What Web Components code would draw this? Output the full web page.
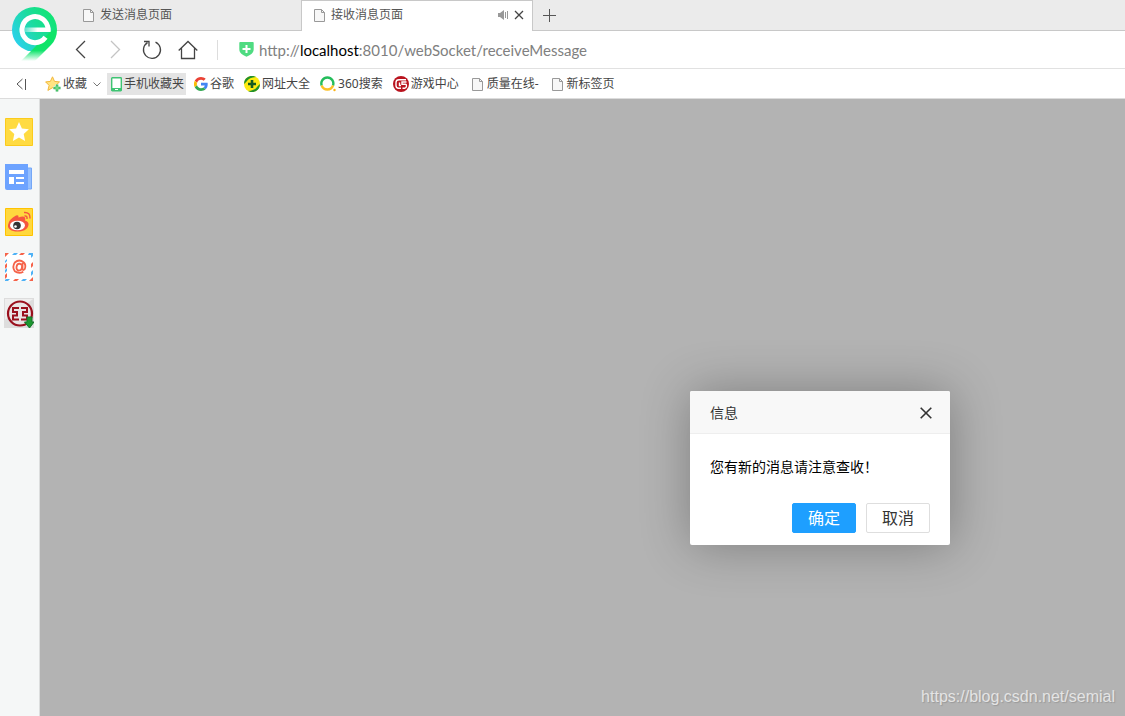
<!DOCTYPE html>
<html lang="zh-CN">
<head>
<meta charset="utf-8">
<title>接收消息页面</title>
<style>
html, body { margin: 0; height: 100%; }
body { font: 12px/16px "Noto Sans", "Noto Sans CJK SC", sans-serif; color: #444; }
</style>
</head>
<body>
<browser-window></browser-window>
<script>
const ICONS = {
  page: '<svg width="16" height="16" viewBox="0 0 16 16"><path d="M3.5 2.5h7l3 3v9h-10z" fill="#f7f7f7" stroke="#999"/><path d="M10.500 2.500v3h3" fill="none" stroke="#999"/></svg>',
  sound: '<svg width="12" height="12" viewBox="0 0 12 12"><path d="M1 4h2l4-3v10L3 8H1z" fill="#999"/><path d="M8.500 3v6M10.500 2v8" stroke="#999"/></svg>',
  close: '<svg width="10" height="10" viewBox="0 0 10 10"><path d="M1 1l8 8M9 1L1 9" stroke="#444" stroke-width="1.300"/></svg>',
  plus: '<svg width="13" height="13" viewBox="0 0 13 13"><path d="M6.500 0v13M0 6.500h13" stroke="#555"/></svg>',
  back: '<svg width="20" height="20" viewBox="0 0 20 20"><path d="M15 1L6.500 9.500 15 18" fill="none" stroke="#444" stroke-width="1.300"/></svg>',
  forward: '<svg width="20" height="20" viewBox="0 0 20 20"><path d="M5 1l8.500 8.500L5 18" fill="none" stroke="#c4c4c4" stroke-width="1.300"/></svg>',
  reload: '<svg width="20" height="20" viewBox="0 0 20 20"><path d="M13.500 2.100A8.500 8.500 0 1 1 5.500 2.600M2 1.500h5v5" fill="none" stroke="#444" stroke-width="1.300"/></svg>',
  home: '<svg width="20" height="20" viewBox="0 0 20 20"><path d="M.7 10.500L10 1.500l9.300 9M3.500 8v10.500h13V8" fill="none" stroke="#444" stroke-width="1.300"/></svg>',
  shield: '<svg width="15" height="16" viewBox="0 0 15 16"><path d="M1 0h13q.7 0 .7 1v6c0 4-3 6-7.200 7.700C3.300 13 .3 11 .3 7V1q0-1 .7-1z" fill="#4fdb81"/><path d="M7.500 3v8M3.500 7h8" stroke="#fff" stroke-width="2"/></svg>',
  collapse: '<svg width="12" height="12" viewBox="0 0 12 12"><path d="M7.500 1L2 6l5.500 5M10.500 1v11" fill="none" stroke="#555"/></svg>',
  star: '<svg width="16" height="16" viewBox="0 0 16 16"><path d="M7.500.8l2 4.600 5 .5-3.700 3.500 1 5-4.300-2.700-4.600 2.700 1.200-5L.6 5.900l4.800-.5z" fill="#ffe482" stroke="#f3b73b" stroke-linejoin="round"/><path d="M12 8.500v7M8.500 12h7" stroke="#fff" stroke-width="4"/><path d="M12 8.500v7M8.500 12h7" stroke="#2fb457" stroke-width="2.600"/><path d="M12 9.500v5M9.500 12h5" stroke="#8ee89c"/></svg>',
  chevron: '<svg width="8" height="8" viewBox="0 0 8 8"><path d="M.5 2.500L4 6l3.500-3.500" fill="none" stroke="#777"/></svg>',
  phone: '<svg width="13" height="16" viewBox="0 0 13 16"><rect x="2.700" y="1.700" width="9.600" height="13" rx=".6" fill="#fff" stroke="#3fc473" stroke-width="1.400"/><path d="M2.500 12h10v3h-10z" fill="#3fc473"/><path d="M6 13.500h3" stroke="#fff"/></svg>',
  google: '<svg width="14" height="14" viewBox="0 0 48 48"><path fill="#ea4335" d="M24 9.500c3.500 0 6.700 1.200 9.200 3.600l6.900-6.900C35.900 2.400 30.500 0 24 0 14.600 0 6.500 5.400 2.600 13.200l8 6.200C12.400 13.700 17.700 9.500 24 9.500z"/><path fill="#4285f4" d="M47 24.600c0-1.600-.2-3.100-.4-4.600H24v9h12.900c-.6 3-2.200 5.500-4.700 7.200l7.700 6C44.400 38 47 31.800 47 24.600z"/><path fill="#fbbc05" d="M10.500 28.600a14.500 14.500 0 0 1 0-9.200l-8-6.200a24 24 0 0 0 0 21.600z"/><path fill="#34a853" d="M24 48c6.500 0 11.900-2.100 15.900-5.800l-7.700-6c-2.200 1.500-4.900 2.300-8.200 2.300-6.300 0-11.600-4.200-13.500-9.900l-8 6.200C6.500 42.600 14.600 48 24 48z"/></svg>',
  sites: '<svg width="16" height="16" viewBox="0 0 16 16"><circle cx="8" cy="8" r="8" fill="#fcea10"/><path d="M0 8A8 8 0 0 1 12 1Q5 1.500 3 5 1.300 7 0 8zM16 8A8 8 0 0 1 4 15q7-.5 9-4 1.700-2 3-3z" fill="#20902c"/><path d="M8 4v8M4 8h8" stroke="#155c20" stroke-width="2.600"/></svg>',
  search: '<svg width="16" height="16" viewBox="0 0 16 16"><path d="M1.700 9.500A6 6 0 1 1 13 9.500" fill="none" stroke="#24bd5b" stroke-width="2.400"/><path d="M1.700 9.500A6 6 0 0 0 13 9.500" fill="none" stroke="#fcc126" stroke-width="2.400"/><circle cx="14.500" cy="14" r="1.200" fill="#fcb316"/></svg>',
  games: '<svg width="16" height="16" viewBox="0 0 16 16"><circle cx="8" cy="8" r="8" fill="#b9131e"/><path d="M13 3.800H6Q3 3.800 3 6.500v3Q3 12.200 5.500 12.200H8M6.500 6.500v3H8M13.500 6H9v2.300h3.500q1 0 1 1.700T12 12.200H9.500" fill="none" stroke="#fff" stroke-width="1.400"/></svg>',
  logo: '<svg width="46" height="56" viewBox="0 0 46 56"><defs><linearGradient id="g" x1="0" y1=".8" x2="1" y2=".2"><stop offset="0" stop-color="#2cd0f4"/><stop offset=".55" stop-color="#1bdc9c"/><stop offset="1" stop-color="#0de66c"/></linearGradient><linearGradient id="t" gradientUnits="userSpaceOnUse" x1="0" y1="38" x2="0" y2="54"><stop offset="0" stop-color="#0ee468"/><stop offset=".35" stop-color="#12e46d"/><stop offset="1" stop-color="#17e572" stop-opacity="0"/></linearGradient><linearGradient id="b"><stop offset="0" stop-color="#fff" stop-opacity=".25"/><stop offset=".5" stop-color="#fff"/></linearGradient></defs><path d="M1 22.500a22.500 22.500 0 0 1 45 0L26 44h-9C7 40 1 33 1 22.500z" fill="url(#g)"/><path d="M46 22.500Q46 32 40 38L24 54H10L40 24z" fill="url(#t)"/><path d="M37 24.500V22.500A13 13 0 1 0 34.500 30.300" fill="none" stroke="#fff" stroke-width="5"/><path d="M13.500 20.500h26V25h-26z" fill="url(#b)"/></svg>',
  favorites: '<svg width="28" height="28" viewBox="0 0 28 28"><path d="M.5.500h27v27H.5z" fill="#ffdb42" stroke="#fbcb1c"/><path d="M14 4l2.900 6.400 7 .8-5.200 4.700 1.400 7L14 19.500 7.900 23l1.400-7.100L4.100 11.200l7-.8z" fill="#fff"/></svg>',
  news: '<svg width="28" height="28" viewBox="0 0 28 28"><path d="M22 5h4.500v21H22z" fill="#94bfff" stroke="#74a7f7"/><path d="M0 1h23v26H2q-2 0-2-2z" fill="#6da3ff"/><path d="M4 7h15v4H4zM4 14h5v7H4zM11 14h8v2h-8zM11 19h8v2h-8z" fill="#fff"/></svg>',
  weibo: '<svg width="28" height="28" viewBox="0 0 28 28"><path d="M.5.500h27v27H.5z" fill="#ffd83e" stroke="#ffc300"/><path d="M3 17Q4 11 11 7.500q3-1 2.500 2 5-2 6.500 0 .5 1.500 0 3 4 1 3.500 4.500c-1 5-6 6.500-11 6.500C6 23.500 2.500 21 3 17z" fill="#f5573f"/><ellipse cx="12.500" cy="17.500" rx="7.500" ry="4.800" fill="#fff"/><circle cx="12" cy="17.500" r="3.800" fill="#333"/><circle cx="10.500" cy="18.500" r="1.300" fill="#fff"/><path d="M19 4.500q6.500-.5 6 6M19.500 8q3-.5 2.500 3" fill="none" stroke="#f5573f" stroke-width="1.500"/></svg>',
  mail: '<svg width="28" height="28" viewBox="0 0 28 28"><path fill="#fff" d="M0 0h28v28H0z"/><path d="M0 0h4L0 4zM16 0h4l-2 2h-4zM28 9v4l-2 2v-4zM28 24v4h-4zM10 26h4l-2 2H8zM0 22l2-2v4l-2 2zM0 12l2-2v4l-2 2z" fill="#f5634a"/><path d="M9 0h4l-2 2H7zM24 0h4v3l-2 2V2h-3zM28 17v4l-2 2v-4zM18 26h4l-2 2h-4zM0 28v-1l1-1h4l-2 2zM0 17l2-2v3l-2 2zM0 8l2-2v2l-2 2z" fill="#4eb2f6"/><path d="M17.500 10v6q.5 2 2.300 0 1.500-4-1-6.500-4.500-4-9 0-3 4.500 0 8.700 4 3 8.500.5M17 13.500c0 3-1.500 4-3 4s-2.800-1.200-2.500-3.500 1.500-3.500 3.300-3.300T17 12z" fill="none" stroke="#f5634a" stroke-width="1.800"/></svg>',
  bank: '<svg width="30" height="30" viewBox="0 0 30 30"><path fill="#ddd" d="M0 0h30v30H0z"/><path fill="#eee" d="M1 1h28L1 22z"/><circle cx="16" cy="15.500" r="12" fill="#e9e5e5" stroke="#9a101d" stroke-width="2.200"/><path d="M15 10H9v4h4v3.500H9v4h6M17 10h6v4h-4v3.500h4v4h-6" fill="none" stroke="#9a101d" stroke-width="2"/><path d="M23 19h5v5h2l-4.500 6-5-6H23z" fill="#1c972f" stroke="#13722a"/></svg>',
  dialogClose: '<svg width="12" height="12" viewBox="0 0 12 12"><path d="M.7.700l10.600 10.600M11.300.700L.7 11.300" stroke="#333" stroke-width="1.600"/></svg>'
};

function define(name, html) {
  const template = document.createElement('template');
  template.innerHTML = html;
  customElements.define(name, class extends HTMLElement {
    constructor() {
      super();
      this.attachShadow({ mode: 'open' }).append(template.content.cloneNode(true));
    }
  });
}

customElements.define('ui-icon', class extends HTMLElement {
  connectedCallback() {
    if (this.shadowRoot) return;
    this.attachShadow({ mode: 'open' }).innerHTML =
      '<style>:host{display:block;flex:none}svg{display:block}</style>' + ICONS[this.getAttribute('name')];
  }
});

const RESET = `
  * { box-sizing: border-box; }
  button { font: inherit; color: inherit; background: none; border: 0; padding: 0; cursor: pointer; }
`;

define('browser-tab', `<style>${RESET}
  :host { display: flex; align-items: center; gap: 4px; width: 231px; padding: 0 8px 0 10px; color: #555; box-sizing: border-box; }
  :host([active]) { background: #fff; border: 1px solid #c8c8c8; border-bottom: 0; width: 232px; height: 31px; padding: 0 7px 2px 9px; }
  .title { flex: 1; white-space: nowrap; }
</style><ui-icon name="page"></ui-icon><span class="title"><slot></slot></span><slot name="actions"></slot>`);

define('tab-strip', `<style>${RESET}
  :host { display: block; background: #ebebeb; border-bottom: 1px solid #c8c8c8; }
  nav { display: flex; height: 30px; padding-left: 70px; }
  button { display: grid; place-items: center; }
  .close { width: 12px; height: 16px; }
  .new { width: 32px; }
</style>
<nav aria-label="标签页">
  <browser-tab>发送消息页面</browser-tab>
  <browser-tab active>接收消息页面
    <ui-icon slot="actions" name="sound"></ui-icon>
    <button class="close" slot="actions" aria-label="关闭标签页"><ui-icon name="close"></ui-icon></button>
  </browser-tab>
  <button class="new" aria-label="新建标签页"><ui-icon name="plus"></ui-icon></button>
</nav>`);

define('address-bar', `<style>${RESET}
  :host { display: flex; align-items: center; height: 38px; padding-left: 62px; background: #fff; border-bottom: 1px solid #e1e1e1; box-sizing: border-box; }
  button { display: grid; place-items: center; width: 36px; height: 36px; }
  .line { width: 1px; height: 20px; background: #ddd; margin: 0 21px 0 11px; }
  .url { flex: 1; margin-left: 5px; font: 15px/20px Lato, sans-serif; color: #808080; outline: 0; }
  b { font-weight: 400; color: #000; }
</style>
<button aria-label="后退"><ui-icon name="back"></ui-icon></button>
<button aria-label="前进"><ui-icon name="forward"></ui-icon></button>
<button aria-label="刷新"><ui-icon name="reload"></ui-icon></button>
<button aria-label="主页"><ui-icon name="home"></ui-icon></button>
<span class="line"></span>
<ui-icon name="shield"></ui-icon>
<div class="url" role="textbox" contenteditable="true" spellcheck="false" aria-label="地址栏">http://<b>localhost</b>:8010/webSocket/receiveMessage</div>`);

customElements.define('bookmark-link', class extends HTMLElement {
  constructor() {
    super();
    this.attachShadow({ mode: 'open' }).innerHTML = `<style>
      :host { display: block; }
      a { display: flex; align-items: center; gap: 2px; height: 22px; padding: 0 2px; color: #444; text-decoration: none; white-space: nowrap; }
      :host([active]) a { background: #e4e4e4; }
    </style><a href="#"><ui-icon name="${this.getAttribute('icon')}"></ui-icon><slot></slot></a>`;
  }
});

define('bookmark-bar', `<style>${RESET}
  :host { display: flex; align-items: center; gap: 6px; height: 30px; padding-left: 15px; background: #fff; border-bottom: 1px solid #dcdcdc; box-sizing: border-box; }
  button { display: flex; align-items: center; }
  .collapse { width: 24px; height: 22px; }
  .favorites { gap: 2px; }
  .favorites ui-icon:last-child { margin-left: 4px; }
</style>
<button class="collapse" aria-label="收起"><ui-icon name="collapse"></ui-icon></button>
<button class="favorites"><ui-icon name="star"></ui-icon><span>收藏</span><ui-icon name="chevron"></ui-icon></button>
<bookmark-link icon="phone" active>手机收藏夹</bookmark-link>
<bookmark-link icon="google">谷歌</bookmark-link>
<bookmark-link icon="sites">网址大全</bookmark-link>
<bookmark-link icon="search">360搜索</bookmark-link>
<bookmark-link icon="games">游戏中心</bookmark-link>
<bookmark-link icon="page">质量在线-</bookmark-link>
<bookmark-link icon="page">新标签页</bookmark-link>`);

define('side-bar', `<style>${RESET}
  :host { display: flex; flex-direction: column; align-items: center; gap: 17px; width: 40px; padding: 19px 2px 0 0; background: #f5f7f7; border-right: 1px solid #dcdede; box-sizing: border-box; }
  button { display: grid; place-items: center; height: 28px; }
</style>
<button aria-label="收藏夹"><ui-icon name="favorites"></ui-icon></button>
<button aria-label="新闻"><ui-icon name="news"></ui-icon></button>
<button aria-label="微博"><ui-icon name="weibo"></ui-icon></button>
<button aria-label="邮箱"><ui-icon name="mail"></ui-icon></button>
<button aria-label="网银"><ui-icon name="bank"></ui-icon></button>`);

define('message-dialog', `<style>${RESET}
  :host { display: block; width: 260px; background: #fff; border-radius: 2px; box-shadow: 1px 1px 50px rgba(0,0,0,.3); font-size: 14px; }
  header { display: flex; align-items: center; justify-content: space-between; height: 43px; padding: 2px 18px 0 20px; color: #333; background: #f8f8f8; border-bottom: 1px solid #eee; border-radius: 2px 2px 0 0; }
  h2 { margin: 0; font: inherit; }
  .body { padding: 21px 20px 19px; line-height: 24px; color: #000; }
  footer { display: flex; justify-content: flex-end; gap: 10px; padding: 5px 20px 12px; }
  footer button { width: 64px; height: 30px; font-size: 16px; line-height: 28px; color: #333; border: 1px solid #dedede; border-radius: 2px; }
  footer .ok { color: #fff; background: #1e9fff; border-color: #1e9fff; }
</style>
<header><h2>信息</h2><button aria-label="关闭"><ui-icon name="dialogClose"></ui-icon></button></header>
<div class="body"><slot></slot></div>
<footer><button class="ok">确定</button><button>取消</button></footer>`);

define('browser-window', `<style>
  :host { display: flex; flex-direction: column; min-height: 100%; position: relative; }
  .logo { position: absolute; left: 11px; top: 7px; }
  .content { display: flex; flex: 1; }
  main { flex: 1; position: relative; overflow: hidden; background: #b3b3b3; }
  message-dialog { position: absolute; top: 292px; right: 175px; }
  .mark { position: absolute; right: 10px; bottom: 8px; font: 16px/22px "Liberation Sans", sans-serif; color: #e4e4e4; text-shadow: 1px 1px 1px #999; }
</style>
<tab-strip></tab-strip>
<address-bar></address-bar>
<bookmark-bar></bookmark-bar>
<ui-icon class="logo" name="logo"></ui-icon>
<div class="content">
  <side-bar></side-bar>
  <main>
    <message-dialog role="dialog" aria-label="信息">您有新的消息请注意查收！</message-dialog>
    <span class="mark">https://blog.csdn.net/semial</span>
  </main>
</div>`);
</script>
</body>
</html>
